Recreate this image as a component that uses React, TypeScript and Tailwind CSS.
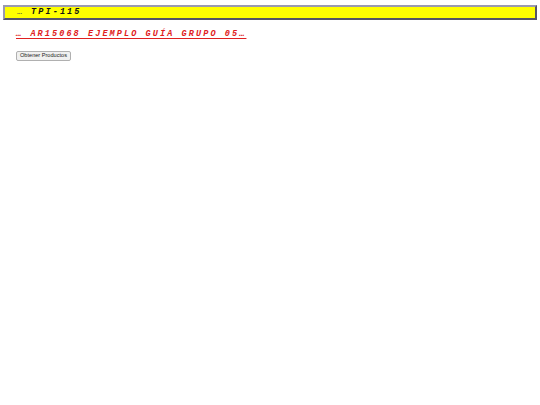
export default function App() {
  return (
    <div className="min-h-[405px] bg-white pt-[5px] font-['Liberation_Sans',sans-serif]">
      <div className="mx-[3px] flex h-[15px] items-center border-2 border-t-[#9a9ab0] border-l-[#9a9ab0] border-r-[#555566] border-b-[#555566] bg-[#ffff00] pl-[12px] font-['Liberation_Mono',monospace] text-[8.5px] leading-none">
        <span className="font-normal not-italic text-[#444] tracking-[2px]">…</span>
        <span className="ml-[7px] font-bold italic tracking-[2.1px] text-[#111]">TPI-115</span>
      </div>
      <div className="mt-[9px] pl-[16px] font-['Liberation_Mono',monospace] text-[8.5px] leading-[10px]">
        <span className="font-bold italic tracking-[2.1px] text-[#e02020] underline decoration-[#e02020] underline-offset-[2px]">
          … AR15068 EJEMPLO GUÍA GRUPO 05…
        </span>
      </div>
      <div className="mt-[12px] pl-[16px] text-[6px] leading-none">
        <button className="h-[10px] rounded-[2px] border border-[#b0b0b0] bg-[#f0f0f0] px-[3px] text-[5.6px] leading-none text-[#222]">
          Obtener Productos
        </button>
      </div>
    </div>
  );
}
